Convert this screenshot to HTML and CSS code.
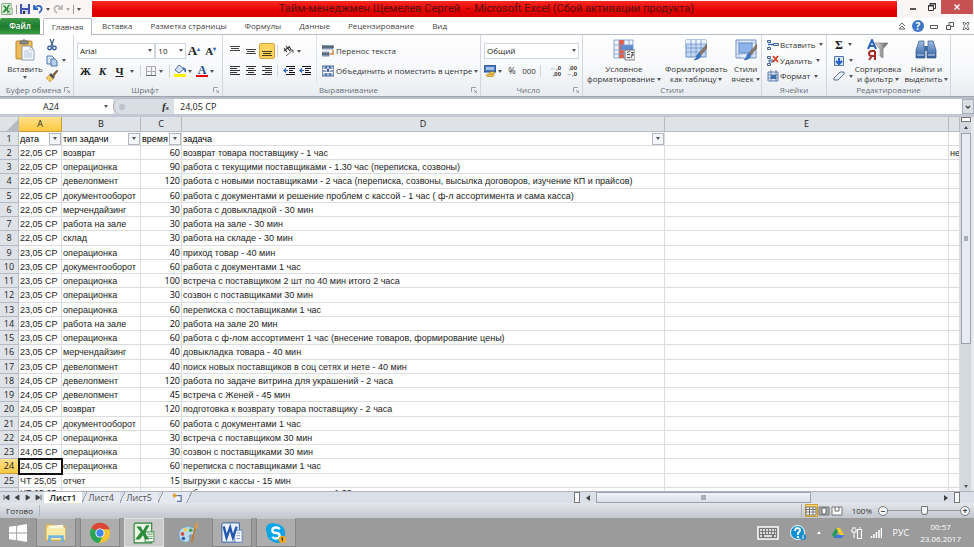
FILE: index.html
```html
<!DOCTYPE html>
<html lang="ru">
<head>
<meta charset="utf-8">
<title>Тайм-менеджмен Щемелев Сергей - Microsoft Excel</title>
<link rel="stylesheet" href="styles.css">
</head>
<body>
<svg class="defs" aria-hidden="true">
  <defs>
    <linearGradient id="blue" x1="0" y1="0" x2="0" y2="1"><stop offset="0" stop-color="#9fbfe6"/><stop offset="1" stop-color="#2f5d9e"/></linearGradient>
    <linearGradient id="steel" x1="0" y1="0" x2="1" y2="0"><stop offset="0" stop-color="#eee"/><stop offset="1" stop-color="#555"/></linearGradient>
  </defs>
  <symbol id="excel" viewBox="0 0 20 20"><path d="M2 1h15v18H1V2z" fill="#e9f5e4" stroke="#2d7d3a"/><path d="M11 9h8v9h-8z" fill="#fff" stroke="#5a9a5f"/><path d="M13 11h5M13 13h5M13 15h5" stroke="#6eb072"/><path d="M3 4h4l2 4 3-5h3l-4 7 4 6h-4l-2-4-3 4H2l5-7z" fill="#2c8a39"/></symbol>
  <symbol id="paste" viewBox="0 0 20 22"><rect x="1" y="2" width="16" height="18" rx="1" fill="#eebb5c" stroke="#b98733"/><path d="M5 4V2h2q2-3 4 0h2v3H5z" fill="#888" stroke="#555" stroke-width=".6"/><path d="M7 7h8l4 4v10H7z" fill="#f5f8fd" stroke="#7589a6" stroke-width=".8"/><path d="M15 7v4h4M9 12h5M9 14h8M9 16h8M9 18h8" stroke="#a5b6cf" stroke-width=".8" fill="none"/></symbol>
  <symbol id="cut" viewBox="0 0 12 12"><path d="M4 0l3 7M8 0L5 7" stroke="#48618a" stroke-width="1.3"/><circle cx="3.6" cy="9" r="1.8" fill="none" stroke="#2450a0" stroke-width="1.3"/><circle cx="8.4" cy="9" r="1.8" fill="none" stroke="#2450a0" stroke-width="1.3"/></symbol>
  <symbol id="copy" viewBox="0 0 12 12"><path d="M1 1h5l2 2v6H1z" fill="#dce8f8" stroke="#4f76ad"/><path d="M5 4h4l2 2v5H5z" fill="#b9d0ef" stroke="#4f76ad"/></symbol>
  <symbol id="brush" viewBox="0 0 12 12"><path d="M7 4l4-4 1 1-4 5z" fill="#8c6030" stroke="#5d4026" stroke-width=".5"/><path d="M5 3l4 4-2 2-4-4z" fill="#555"/><path d="M3 5l4 4-3 3-4-4z" fill="#efcf65" stroke="#a88334" stroke-width=".5"/></symbol>
  <symbol id="borders" viewBox="0 0 12 12"><path d="M1.500 1.500h9v9h-9zM6.500 2v9M1 6.500h10" fill="none" stroke="#aaa"/><path d="M1 10.500h10" stroke="#666"/></symbol>
  <symbol id="bucket" viewBox="0 0 12 12"><path d="M5 0L1 5l4 3 5-4z" fill="#d5e3f4" stroke="#4c6d9b"/><path d="M9 3q3 1 2 4" stroke="#2e65b3" stroke-width="1.6" fill="none"/><path d="M0 9h12v3H0z" fill="#ffef00"/></symbol>
  <symbol id="top" viewBox="0 0 12 12"><path d="M1 1.500h10M2 3.500h8M1 5.500h10" stroke="#444" stroke-width="1.200"/></symbol>
  <symbol id="mid" viewBox="0 0 12 12"><path d="M1 4.500h10M2 6.500h8M1 8.500h10" stroke="#444" stroke-width="1.200"/></symbol>
  <symbol id="bot" viewBox="0 0 12 12"><path d="M1 6.500h10M2 8.500h8M1 10.500h10" stroke="#4b3a10" stroke-width="1.200"/></symbol>
  <symbol id="left" viewBox="0 0 12 12"><path d="M1 1.500h10M1 3.500h7M1 5.500h10M1 7.500h7M1 9.500h10" stroke="#333"/></symbol>
  <symbol id="center" viewBox="0 0 12 12"><path d="M1 1.500h10M3 3.500h6M1 5.500h10M3 7.500h6M1 9.500h10" stroke="#333"/></symbol>
  <symbol id="right" viewBox="0 0 12 12"><path d="M1 1.500h10M4 3.500h7M1 5.500h10M4 7.500h7M1 9.500h10" stroke="#333"/></symbol>
  <symbol id="orient" viewBox="0 0 12 12"><path d="M1 3l3 4M3 1l4 5M1 6l5-4M6 1l2 4" stroke="#333" stroke-width="1.1" fill="none"/><path d="M3 11l7-6M7 5h3v3" stroke="#666" fill="none"/></symbol>
  <symbol id="outdent" viewBox="0 0 12 12"><path d="M3 1.500h9M6 3.500h6M6 5.500h4M6 7.500h6M3 9.500h9" stroke="#111"/><path d="M5 5.500H1M3 3.500l-2 2 2 2" stroke="#2a64c8" stroke-width="1.2" fill="none"/></symbol>
  <symbol id="wrap" viewBox="0 0 12 12"><path d="M0 0h11v4H0zM0 7h7v4H0z" fill="#9db4d6" stroke="#50688e" stroke-width=".7"/><path d="M0 2h12M0 9h7" stroke="#222"/><path d="M11 5v4H8" stroke="#d98135" stroke-width="1.5" fill="none"/></symbol>
  <symbol id="merge" viewBox="0 0 12 12"><path d="M0 1h12v10H0z" fill="#a9c0e0" stroke="#4d6a98"/><path d="M1 4h10v4H1z" fill="#fff"/><path d="M1 6h3M8 6h3M5 7l1-3 1 3M4 1v3M8 1v3M4 8v3M8 8v3" stroke="#243f78" fill="none"/></symbol>
  <symbol id="money" viewBox="0 0 12 12"><path d="M0 0h12v7H0z" fill="#4c78bb" stroke="#244c89"/><path d="M2 2h8v3H2z" fill="#a5c2e9"/><ellipse cx="8" cy="8" rx="3" ry="1.3" fill="#f2cf60" stroke="#a37c20" stroke-width=".6"/><ellipse cx="6" cy="10.4" rx="4" ry="1.4" fill="#edc14b" stroke="#a37c20" stroke-width=".6"/></symbol>
  <symbol id="cond" viewBox="0 0 22 22"><path d="M1 1h19v18H1z" fill="#eef4fc" stroke="#8ba6cd"/><path d="M6 1h5v18H6z" fill="#ec5b41"/><path d="M8 6h12v5H8z" fill="#5a8bd0"/><path d="M1 6h19M1 11h19M1 15h19M6 1v18M11 1v18M16 1v18" stroke="#7c9bc6" stroke-width=".8"/><path d="M12 11h10v10H12z" fill="#eee" stroke="#666" stroke-width=".8"/><path d="M14 13.500l3-1.500M14 15.500h3M18 13.500h3M18 16h3M14 18.500h3M18 19l2-5" stroke="#333" stroke-width=".8"/></symbol>
  <symbol id="tbl" viewBox="0 0 22 22"><path d="M1 1h20v17H1z" fill="#c2d8f3" stroke="#6b8fc4"/><path d="M1 1h20v4H1z" fill="#eaf2fc"/><path d="M1 5h20M1 9h20M1 13h20M6 1v17M11 1v17M16 1v17" stroke="#7396c9" stroke-width=".8"/><path d="M22 5l-8 9 2 2 6-7z" fill="#8a7765" stroke="#5e554e" stroke-width=".5"/><path d="M14 14l2 3q-2 4-7 4 3-2 3-5z" fill="#3b78c9" stroke="#2b568d" stroke-width=".5"/></symbol>
  <symbol id="cellst" viewBox="0 0 22 22"><path d="M1 1h20v18H1z" fill="#e6effb" stroke="#6b8fc4"/><path d="M4 4h13v10H4z" fill="#8db4e8" stroke="#5783c2"/><path d="M1 4h20M1 15h20M4 1v18M17 1v18" stroke="#8eabd4" stroke-width=".8"/><path d="M22 5l-8 9 2 2 6-7z" fill="#8a7765" stroke="#5e554e" stroke-width=".5"/><path d="M14 14l2 3q-2 4-7 4 3-2 3-5z" fill="#3b78c9" stroke="#2b568d" stroke-width=".5"/></symbol>
  <symbol id="ins" viewBox="0 0 12 12"><path d="M.5 1.500h3v2h-3zM.5 8.500h3v2h-3zM6.500 4.500h5v2h-5z" fill="#dbe7f6" stroke="#45648f"/><path d="M6 5.500H1" stroke="#245fb0" stroke-width="1.4"/></symbol>
  <symbol id="del" viewBox="0 0 12 12"><path d="M.5 1.500h3v2h-3zM.5 8.500h3v2h-3zM2 5h4v2H2z" fill="#dbe7f6" stroke="#45648f"/><path d="M6 1l5 6M11 1L6 7" stroke="#e13a20" stroke-width="1.8"/></symbol>
  <symbol id="fmt" viewBox="0 0 12 12"><path d="M1 2h10v9H1z" fill="#dbe7f6" stroke="#6483b1"/><path d="M4 5h5v4H4z" fill="#3e72bd"/><path d="M1 5h10M1 8h10M4 0v11M9 0v11" stroke="#45648f" stroke-width=".7"/></symbol>
  <symbol id="fill" viewBox="0 0 12 12"><path d="M1.500 1.500h9v9h-9z" fill="#d9e6f8" stroke="#5779aa"/><path d="M6 3v6M3 6l3 3 3-3" stroke="#2361c8" stroke-width="2" fill="none"/></symbol>
  <symbol id="eraser" viewBox="0 0 12 12"><path d="M1 8l6-6h4v2l-6 6H1z" fill="#e8eef7" stroke="#60708c"/></symbol>
  <symbol id="funnel" viewBox="0 0 22 22"><path d="M8 4h13l-5 6v9l-3-2v-7z" fill="url(#steel)" stroke="#777" stroke-width=".6"/><path d="M1 10L5 1l4 9M2 7h6" stroke="#2c62b5" stroke-width="2" fill="none"/><path d="M8 12v9M8 12H5q-3 0-3 2.500t3 2.500h3M5 17l-3 4" stroke="#a52a28" stroke-width="2" fill="none"/></symbol>
  <symbol id="binoc" viewBox="0 0 22 22"><path d="M4 2h5v5l1 3v9H1v-8zM13 2h5l3 9v8h-9v-9l1-3z" fill="url(#blue)" stroke="#36547f" stroke-width=".7"/><path d="M9 7h4v5H9z" fill="#466da5"/><path d="M2 16h7M13 16h7" stroke="#c5d8f0"/></symbol>
  <symbol id="launch" viewBox="0 0 6 6"><path d="M.5 5V.5H5M3 3l2.500 2.500M6 3v3H3" fill="none" stroke="#888" stroke-width=".8"/></symbol>
  <symbol id="grid" viewBox="0 0 12 12"><path d="M1 2h10v8H1zM1 4.500h10M1 7h10M4.500 2v8M8 2v8" fill="#fff" stroke="#666" stroke-width=".9"/></symbol>
</svg>

<div class="window">
<header class="titlebar">
  <div class="quick">
    <svg class="i12"><use href="#excel"/></svg><i class="bar"></i>
    <button aria-label="Сохранить"><svg class="i10" viewBox="0 0 10 10"><path d="M0 0h10v10H0z" fill="#4551b5"/><path d="M2 0h6v4H2z" fill="#e8eefb"/><path d="M2 6h6v4H2z" fill="#c9d2ee"/><path d="M3 7h2v3H3z" fill="#333"/></svg></button>
    <button aria-label="Отменить"><svg class="i10" viewBox="0 0 10 10"><path d="M1 1v4h4M1 5q4-5 7-2 2 3-2 6" fill="none" stroke="#2d66c0" stroke-width="1.800"/></svg></button><i class="caret"></i>
    <button aria-label="Вернуть"><svg class="i10" viewBox="0 0 10 10"><path d="M9 1v4H5M9 5Q5 0 2 3 0 6 4 9" fill="none" stroke="#b5b5b5" stroke-width="1.600"/></svg></button><i class="caret pale"></i><i class="bar"></i><i class="caret"></i>
  </div>
  <h1>Тайм-менеджмен Щемелев Сергей &nbsp;-&nbsp; Microsoft Excel (Сбой активации продукта)</h1>
  <div class="syskeys">
    <button aria-label="Свернуть"><svg class="i8" viewBox="0 0 8 8"><path d="M1 6h6" stroke="#222" stroke-width="1.500"/></svg></button>
    <button aria-label="Развернуть"><svg class="i8" viewBox="0 0 8 8"><path d="M.5 2.500h5v5h-5zM2 2V.5h5.500v5H6" fill="none" stroke="#333"/><path d="M0 3h6M2 1h6" stroke="#333"/></svg></button>
    <button class="close" aria-label="Закрыть"><svg class="i8" viewBox="0 0 8 8"><path d="M1.500 1.500l5 5M6.500 1.500l-5 5" stroke="#fff" stroke-width="1.400"/></svg></button>
  </div>
</header>

<nav class="tabs">
  <button class="file">Файл</button>
  <button class="active">Главная</button>
  <button>Вставка</button><button>Разметка страницы</button><button>Формулы</button><button>Данные</button><button>Рецензирование</button><button>Вид</button>
  <div class="tabtools">
    <svg class="i8" viewBox="0 0 8 8"><path d="M1 4l3-3 3 3M1 7l3-3 3 3z" fill="none" stroke="#666"/></svg>
    <span class="help">?</span>
    <svg class="i8" viewBox="0 0 8 8"><path d="M.5 3.500h7v3h-7z" fill="none" stroke="#555"/></svg>
    <svg class="i8" viewBox="0 0 8 8"><path d="M.5 3.500h4v4h-4zM3 3V.5h4.500v4H5" fill="none" stroke="#555"/></svg>
    <svg class="i8" viewBox="0 0 8 8"><path d="M1 .5h2l1 2 1-2h2L5.500 4 7 7.500H5l-1-2-1 2H1L2.500 4z" fill="none" stroke="#555" stroke-width=".8"/></svg>
  </div>
</nav>

<section class="ribbon">
  <div class="group g-clip">
    <div class="body">
      <button class="big"><svg class="i22"><use href="#paste"/></svg><span>Вставить</span><i class="caret"></i></button>
      <div class="stack"><button aria-label="Вырезать"><svg class="i12"><use href="#cut"/></svg></button><button aria-label="Копировать"><svg class="i12"><use href="#copy"/></svg><i class="caret"></i></button><button aria-label="Формат по образцу"><svg class="i12"><use href="#brush"/></svg></button></div>
    </div>
    <footer><span>Буфер обмена</span><svg class="i6"><use href="#launch"/></svg></footer>
  </div>
  <div class="group g-font">
    <div class="body rows">
      <div class="row">
        <label class="combo wide"><select aria-label="Шрифт"><option>Arial</option></select><i class="caret"></i></label><label class="combo narrow"><select aria-label="Размер"><option>10</option></select><i class="caret"></i></label>
        <button class="serif grow">A<sup>▴</sup></button><button class="serif shrink">A<sup>▾</sup></button>
      </div>
      <div class="row styles">
        <button class="serif">Ж</button><button class="serif it">К</button><button class="serif un">Ч</button><i class="caret"></i><i class="sep"></i>
        <button aria-label="Границы"><svg class="i12"><use href="#borders"/></svg></button><i class="caret"></i><i class="sep"></i>
        <button aria-label="Заливка"><svg class="i12"><use href="#bucket"/></svg></button><i class="caret"></i>
        <button class="serif color">A</button><i class="caret"></i>
      </div>
    </div>
    <footer><span>Шрифт</span><svg class="i6"><use href="#launch"/></svg></footer>
  </div>
  <div class="group g-align">
    <div class="body">
      <div class="rows alignkeys">
        <div class="row"><button aria-label="Сверху"><svg class="i12"><use href="#top"/></svg></button><button aria-label="По середине"><svg class="i12"><use href="#mid"/></svg></button><button class="on" aria-label="Снизу"><svg class="i12"><use href="#bot"/></svg></button><i class="sep"></i><button aria-label="Ориентация"><svg class="i12"><use href="#orient"/></svg></button><i class="caret"></i></div>
        <div class="row"><button aria-label="Слева"><svg class="i12"><use href="#left"/></svg></button><button aria-label="По центру"><svg class="i12"><use href="#center"/></svg></button><button aria-label="Справа"><svg class="i12"><use href="#right"/></svg></button><i class="sep"></i><button aria-label="Уменьшить отступ"><svg class="i12"><use href="#outdent"/></svg></button><button aria-label="Увеличить отступ"><svg class="i12"><use href="#outdent"/></svg></button></div>
      </div>
      <div class="rows wraps">
        <div class="row"><button><svg class="i12"><use href="#wrap"/></svg>Перенос текста</button></div>
        <div class="row"><button><svg class="i12"><use href="#merge"/></svg>Объединить и поместить в центре<i class="caret"></i></button></div>
      </div>
    </div>
    <footer><span>Выравнивание</span><svg class="i6"><use href="#launch"/></svg></footer>
  </div>
  <div class="group g-num">
    <div class="body rows">
      <div class="row"><label class="combo full"><select aria-label="Формат числа"><option>Общий</option></select><i class="caret"></i></label></div>
      <div class="row nums"><button aria-label="Денежный"><svg class="i12"><use href="#money"/></svg></button><i class="caret"></i><button class="pct">%</button><button class="zeros">000</button><i class="sep"></i><button class="dec"><b>←</b>,0<br>,00</button><button class="dec">,00<br><b>→</b>,0</button></div>
    </div>
    <footer><span>Число</span><svg class="i6"><use href="#launch"/></svg></footer>
  </div>
  <div class="group g-style">
    <div class="body">
      <button class="big"><svg class="i22"><use href="#cond"/></svg><span>Условное</span><span>форматирование<i class="caret"></i></span></button>
      <button class="big"><svg class="i22"><use href="#tbl"/></svg><span>Форматировать</span><span>как таблицу<i class="caret"></i></span></button>
      <button class="big"><svg class="i22"><use href="#cellst"/></svg><span>Стили</span><span>ячеек<i class="caret"></i></span></button>
    </div>
    <footer><span>Стили</span></footer>
  </div>
  <div class="group g-cells">
    <div class="body"><div class="stack">
      <button><svg class="i12"><use href="#ins"/></svg>Вставить<i class="caret"></i></button><button><svg class="i12"><use href="#del"/></svg>Удалить<i class="caret"></i></button><button><svg class="i12"><use href="#fmt"/></svg>Формат<i class="caret"></i></button>
    </div></div>
    <footer><span>Ячейки</span></footer>
  </div>
  <div class="group g-edit">
    <div class="body">
      <div class="stack"><button class="sigma">Σ<i class="caret"></i></button><button aria-label="Заполнить"><svg class="i12"><use href="#fill"/></svg><i class="caret"></i></button><button aria-label="Очистить"><svg class="i12"><use href="#eraser"/></svg><i class="caret"></i></button></div>
      <button class="big"><svg class="i22"><use href="#funnel"/></svg><span>Сортировка</span><span>и фильтр<i class="caret"></i></span></button>
      <button class="big"><svg class="i22"><use href="#binoc"/></svg><span>Найти и</span><span>выделить<i class="caret"></i></span></button>
    </div>
    <footer><span>Редактирование</span></footer>
  </div>
</section>

<section class="formula">
  <div class="namebox"><input class="name" aria-label="Имя ячейки" value="A24"><i class="caret"></i></div>
  <div class="fxbar"><i class="knob"></i><em>f<small>x</small></em></div>
  <input class="value" aria-label="Строка формул" value="24,05 СР">
  <button class="expand" aria-label="Развернуть строку"><svg class="i6" viewBox="0 0 6 6"><path d="M1 2l2 2 2-2" fill="none" stroke="#444" stroke-width="1.400"/></svg></button>
</section>

<main class="sheet">
  <div class="cells">
  <table>
    <colgroup><col class="c-n"><col class="c-a"><col class="c-b"><col class="c-c"><col class="c-d"><col class="c-e"><col class="c-f"></colgroup>
    <thead><tr><th class="corner"></th><th class="cur">A</th><th>B</th><th>C</th><th>D</th><th>E</th><th></th></tr></thead>
    <tbody>
    <tr class="names"><th>1</th><td><div>дата<button aria-label="Фильтр"></button></div></td><td><div>тип задачи<button aria-label="Фильтр"></button></div></td><td><div>время<button aria-label="Фильтр"></button></div></td><td><div>задача<button aria-label="Фильтр"></button></div></td><td></td><td></td></tr>
    <tr><th>2</th><td>22,05 СР</td><td>возврат</td><td>60</td><td>возврат товара поставщику - 1 час</td><td></td><td>не</td></tr>
    <tr><th>3</th><td>22,05 СР</td><td>операционка</td><td>90</td><td>работа с текущими поставщиками - 1.30 час (переписка, созвоны)</td><td></td><td></td></tr>
    <tr><th>4</th><td>22,05 СР</td><td>девелопмент</td><td>120</td><td>работа с новыми поставщиками - 2 часа (переписка, созвоны, высылка договоров, изучение КП и прайсов)</td><td></td><td></td></tr>
    <tr><th>5</th><td>22,05 СР</td><td>документооборот</td><td>60</td><td>работа с документами и решение проблем с кассой - 1 час ( ф-л ассортимента и сама касса)</td><td></td><td></td></tr>
    <tr><th>6</th><td>22,05 СР</td><td>мерчендайзинг</td><td>30</td><td>работа с довыкладкой - 30 мин</td><td></td><td></td></tr>
    <tr><th>7</th><td>22,05 СР</td><td>работа на зале</td><td>30</td><td>работа на зале - 30 мин</td><td></td><td></td></tr>
    <tr><th>8</th><td>22,05 СР</td><td>склад</td><td>30</td><td>работа на складе - 30 мин</td><td></td><td></td></tr>
    <tr><th>9</th><td>23,05 СР</td><td>операционка</td><td>40</td><td>приход товар - 40 мин</td><td></td><td></td></tr>
    <tr><th>10</th><td>23,05 СР</td><td>документооборот</td><td>60</td><td>работа с документами 1 час</td><td></td><td></td></tr>
    <tr><th>11</th><td>23,05 СР</td><td>операционка</td><td>100</td><td>встреча с поставщиком 2 шт по 40 мин итого 2 часа</td><td></td><td></td></tr>
    <tr><th>12</th><td>23,05 СР</td><td>операционка</td><td>30</td><td>созвон с поставщиками 30 мин</td><td></td><td></td></tr>
    <tr><th>13</th><td>23,05 СР</td><td>операционка</td><td>60</td><td>переписка с поставщиками 1 час</td><td></td><td></td></tr>
    <tr><th>14</th><td>23,05 СР</td><td>работа на зале</td><td>20</td><td>работа на зале 20 мин</td><td></td><td></td></tr>
    <tr><th>15</th><td>23,05 СР</td><td>операционка</td><td>60</td><td>работа с ф-лом ассортимент 1 час (внесение товаров, формирование цены)</td><td></td><td></td></tr>
    <tr><th>16</th><td>23,05 СР</td><td>мерчендайзинг</td><td>40</td><td>довыкладка товара - 40 мин</td><td></td><td></td></tr>
    <tr><th>17</th><td>23,05 СР</td><td>девелопмент</td><td>40</td><td>поиск новых поставщиков в соц сетях и нете - 40 мин</td><td></td><td></td></tr>
    <tr><th>18</th><td>24,05 СР</td><td>девелопмент</td><td>120</td><td>работа по задаче витрина для украшений - 2 часа</td><td></td><td></td></tr>
    <tr><th>19</th><td>24,05 СР</td><td>девелопмент</td><td>45</td><td>встреча с Женей - 45 мин</td><td></td><td></td></tr>
    <tr><th>20</th><td>24,05 СР</td><td>возврат</td><td>120</td><td>подготовка к возврату товара поставщику - 2 часа</td><td></td><td></td></tr>
    <tr><th>21</th><td>24,05 СР</td><td>документооборот</td><td>60</td><td>работа с документами 1 час</td><td></td><td></td></tr>
    <tr><th>22</th><td>24,05 СР</td><td>операционка</td><td>30</td><td>встреча с поставщиком 30 мин</td><td></td><td></td></tr>
    <tr><th>23</th><td>24,05 СР</td><td>операционка</td><td>30</td><td>созвон с поставщиками 30 мин</td><td></td><td></td></tr>
    <tr><th class="cur">24</th><td class="picked">24,05 СР</td><td>операционка</td><td>60</td><td>переписка с поставщиками 1 час</td><td></td><td></td></tr>
    <tr><th>25</th><td>ЧТ 25,05</td><td>отчет</td><td>15</td><td>выгрузки с кассы - 15 мин</td><td></td><td></td></tr>
    <tr class="tail"><th></th><td>ЧТ 25,05</td><td></td><td></td><td>работа с текущими поставщиками - 1.30</td><td></td><td></td></tr>
    </tbody>
  </table>
  </div>
  <div class="vscroll"><i class="split"></i><i class="caret up"></i><i class="thumb"></i><i class="caret"></i></div>
</main>

<div class="sheetbar">
  <div class="arrows"><svg viewBox="0 0 44 12"><path d="M4 3v5M9 3v5L5 5.500zM19 3v5l-4-2.500zM26 3v5l4-2.500zM36 3v5l4-2.500zM41 3v5" fill="#444" stroke="#444" stroke-width=".8"/></svg></div>
  <button class="leaf on">Лист1</button><button class="leaf">Лист4</button><button class="leaf">Лист5</button>
  <button class="leaf add" aria-label="Вставить лист"><svg class="i10" viewBox="0 0 12 12"><path d="M4 3h7v7H6" fill="#f4f7fd" stroke="#5877a6" stroke-width="1.500"/><path d="M3 0v6M0 3h6M1 1l4 4M5 1L1 5" stroke="#e79a28"/></svg></button>
  <div class="hscroll"><i class="split"></i><i class="caret lt"></i><i class="track"><i class="thumb"><i></i></i></i><i class="caret rt"></i><i class="split"></i></div>
</div>

<div class="status">
  <span>Готово</span><i class="line"></i>
  <div class="views"><button class="on" aria-label="Обычный"><svg class="i12"><use href="#grid"/></svg></button><button aria-label="Разметка"><svg class="i12" viewBox="0 0 12 12"><path d="M1 2h10v8H1z" fill="#aaa" stroke="#777"/><path d="M4 3h4v6H4z" fill="#fff" stroke="#666"/></svg></button><button aria-label="Страничный"><svg class="i12" viewBox="0 0 12 12"><path d="M1 2h10v8H1z" fill="#fff" stroke="#777"/><path d="M4 2v4h4V2" fill="none" stroke="#666"/></svg></button></div>
  <output>100%</output>
  <button class="round">−</button><input type="range" aria-label="Масштаб" min="0" max="100" value="50"><button class="round">+</button>
</div>

<footer class="taskbar">
  <button class="start" aria-label="Пуск"><svg viewBox="0 0 20 20"><path d="M0 3l8-1v7.500H0zM9 2l11-2v9.500H9zM0 10.500h8V18l-8-1zM9 10.500h11V20L9 18z" fill="#fff"/></svg></button>
  <button class="app open" aria-label="Проводник"><svg viewBox="0 0 24 24"><path d="M1 3h8l2 2h11v15H1z" fill="#efd27a" stroke="#d2ab49"/><path d="M2 7h20v12H2z" fill="#f9eaa8"/><path d="M4 4l16-1v4H4z" fill="#fff8d9"/><path d="M5 22v-6h14v6" fill="none" stroke="#70b6dc" stroke-width="3"/></svg></button>
  <button class="app open" aria-label="Chrome"><svg viewBox="0 0 24 24"><circle cx="12" cy="12" r="11" fill="#f4c431"/><path d="M12 12L2.500 6.500A11 11 0 0 1 22.500 8H12z" fill="#dc4637"/><path d="M2.500 6.500A11 11 0 0 0 11 23l5-9-4-2z" fill="#2ca45a"/><circle cx="12" cy="12" r="5" fill="#fff"/><circle cx="12" cy="12" r="4" fill="#4285e8"/></svg></button>
  <button class="app open current" aria-label="Excel"><svg><use href="#excel"/></svg></button>
  <button class="app" aria-label="Paint"><svg viewBox="0 0 24 24"><path d="M2 14Q2 6 11 5q10 0 9 7-1 3-5 2-3 0-1 4 0 4-5 4-7-1-7-8z" fill="#b9dced" stroke="#6fa3bd"/><circle cx="6" cy="13" r="2" fill="#d64b3c"/><circle cx="9" cy="8.500" r="2" fill="#f2c94a"/><circle cx="15" cy="9" r="2" fill="#4a9c4b"/><circle cx="7" cy="18" r="2" fill="#385eb2"/><path d="M21 1l-5 21" stroke="#bd7a36" stroke-width="2"/><path d="M20 1h3l-1 6h-3z" fill="#d99a4e"/></svg></button>
  <button class="app open" aria-label="Word"><svg viewBox="0 0 24 24"><path d="M2 1h18v21H1V2z" fill="#eaf1fc" stroke="#2c5aa5"/><path d="M15 9h8v13h-8z" fill="#fff" stroke="#5c83bf"/><path d="M17 12h4M17 15h4M17 18h4" stroke="#6f96d0"/><path d="M3 5l3 12 4-11 3 11 4-12" fill="none" stroke="#2456ae" stroke-width="2.600"/></svg></button>
  <button class="app open" aria-label="Skype"><svg viewBox="0 0 24 24"><circle cx="8" cy="8" r="7" fill="#0aa5e6"/><circle cx="15" cy="16" r="7" fill="#0aa5e6"/><circle cx="12" cy="12" r="10" fill="#0aa5e6"/><path d="M16 8q-1-2-4-2-4 0-4 3t4 3 4 3-4 3q-3 0-4-2" fill="none" stroke="#fff" stroke-width="2.500"/><circle cx="19" cy="19" r="4" fill="#f5a623"/><path d="M18 18l1-1v4" stroke="#222" fill="none"/></svg></button>
  <div class="tray">
    <svg class="kbd" viewBox="0 0 22 14"><path d="M1 1h20v12H1z" fill="#777" stroke="#fff" stroke-width="1.500"/><path d="M3 4h16M3 7h16" stroke="#fff" stroke-width="1.500" stroke-dasharray="2 1"/><path d="M3 10h2M7 10h8M17 10h2" stroke="#fff" stroke-width="1.500"/></svg>
    <svg class="i16" viewBox="0 0 16 16"><circle cx="7.500" cy="7.500" r="7" fill="#0d8fd0" stroke="#fff"/><path d="M5 6q0-3 3-3 3 1 2 3L8 8v2M8 11v2" fill="none" stroke="#fff" stroke-width="1.800"/><circle cx="13" cy="12" r="3" fill="#1488c8"/><path d="M13 10v4" stroke="#fff"/></svg>
    <i class="caret up"></i>
    <svg class="i12" viewBox="0 0 12 12"><path d="M4 1h4l4 7H8z" fill="#fbcc30"/><path d="M4 1l2 3.500L2 11 0 8z" fill="#1c9b55"/><path d="M4 8h8l-2 3H2z" fill="#3c74d8"/></svg>
    <svg class="i12" viewBox="0 0 12 12"><path d="M6.500 2.500h4v9h-4zM8 1h2M1 2v3h4V2M3 5v6M2 0v2M4 0v2" fill="none" stroke="#fff" stroke-width="1.100"/></svg>
    <svg class="i12" viewBox="0 0 12 12"><path d="M1.500 9v2M4 7v4M6.500 5v6M9 3v8M11.500 1v10" stroke="#fff" stroke-width="1.500"/></svg>
    <span>РУС</span>
    <time>00:57<br>23.06.2017</time>
  </div>
</footer>
</div>
</body>
</html>
```

FILE: styles.css
```css
* { box-sizing: border-box; }
body { margin: 0; font: 8px/10px "Open Sans", "Noto Sans", sans-serif; color: #333; }
button, input, select { font: inherit; color: inherit; background: none; border: 0; padding: 0; margin: 0; outline: 0; }
button { display: inline-flex; align-items: center; justify-content: center; white-space: nowrap; }
svg { display: block; flex: none; }
.defs { position: absolute; width: 0; height: 0; }
.i6 { width: 6px; height: 6px; }
.i8 { width: 8px; height: 8px; }
.i10 { width: 10px; height: 10px; }
.i12 { width: 12px; height: 12px; }
.i16 { width: 16px; height: 16px; }
.i22 { width: 22px; height: 22px; }
.caret { flex: none; display: inline-block; border: 2px solid transparent; border-top: 3px solid #555; border-bottom: 0; margin: 0 2px; }
.caret.up { border-top: 0; border-bottom: 3px solid #444; }
.caret.lt { border: 3px solid transparent; border-right: 4px solid #444; border-left: 0; }
.caret.rt { border: 3px solid transparent; border-left: 4px solid #444; border-right: 0; }
.caret.pale { border-top-color: #aaa; }
.window { height: 100vh; display: flex; flex-direction: column; overflow: hidden; background: #fff; }

.titlebar { flex: none; display: flex; height: 18px; background: #fbf5f5; }
.quick { width: 92px; display: flex; align-items: center; gap: 3px; padding: 0 1px; }
.quick .caret { margin: 0; }
.quick .bar { width: 1px; height: 9px; background: #999; }
.titlebar h1 { flex: 1; margin: 1px 0 0; padding-right: 16px; height: 16px; background: linear-gradient(#f92a22, #e30000 60%, #d90000); color: #5a1010; font-family: Roboto, sans-serif; font-size: 11px; line-height: 16px; font-weight: 400; text-align: center; white-space: nowrap; }
.syskeys { display: flex; width: 77px; justify-content: flex-end; height: 14px; }
.syskeys button { width: 19px; }
.syskeys .close { width: 32px; background: #c75050; margin-right: 1px; }

.tabs { flex: none; display: flex; height: 17px; border-bottom: 1px solid #b6bcc6; color: #444; }
.tabs button { padding: 0 9px; }
.tabs .file { width: 40px; margin-right: 3px; padding: 0; background: linear-gradient(#3e9a45, #1d7b30 50%, #3a9c41); color: #fff; font-weight: 600; border-radius: 2px 2px 0 0; }
.tabs .active { width: 49px; margin-right: 1px; padding: 0; background: #fff; border: 1px solid #b6bcc6; border-bottom: 0; margin-bottom: -1px; border-radius: 2px 2px 0 0; }
.tabtools { margin-left: auto; display: flex; align-items: center; gap: 8px; padding-right: 4px; }
.help { width: 12px; height: 12px; border-radius: 50%; background: #3e76c7; color: #fff; font-weight: 700; font-size: 10px; line-height: 12px; text-align: center; margin: 0 -2px; }

.ribbon { flex: none; display: flex; height: 62px; background: linear-gradient(#fff, #f8f9fb 50%, #e9ecf1); border-bottom: 1px solid #9ea5b0; }
.group { flex: none; display: flex; flex-direction: column; border-right: 1px solid #d3d7dd; }
.g-clip { width: 74px; }
.g-font { width: 149px; }
.g-align { width: 258px; }
.g-num { width: 102px; }
.g-style { width: 179px; }
.g-cells { width: 65px; }
.g-edit { width: 124px; }
.body { flex: 1; display: flex; min-height: 0; }
.group footer { display: flex; align-items: center; height: 12px; color: #6b7380; padding: 0 3px; }
.group footer span { flex: 1; text-align: center; white-space: nowrap; }
.big { flex-direction: column; justify-content: flex-start; padding: 4px 2px 0; line-height: 10px; }
.big svg { margin-bottom: 3px; }
.big span { display: flex; align-items: center; height: 10px; }
.big > .caret { margin-top: 2px; }
.big span .caret { margin: 0 0 0 2px; }
.stack { display: flex; flex-direction: column; align-items: flex-start; padding-top: 2px; }
.stack button { height: 16px; gap: 1px; }
.stack .caret { margin: 0 0 0 3px; }
.g-clip .big { width: 42px; margin-left: 4px; }
.rows { flex-direction: column; padding: 6px 3px 0; }
.row { display: flex; align-items: center; height: 20px; }
.combo { display: flex; align-items: center; height: 16px; border: 1px solid #d1d5dc; background: #fff; margin-top: -1px; }
.combo select { flex: 1; min-width: 0; appearance: none; padding-left: 2px; color: #222; }
.wide { width: 80px; }
.narrow { width: 31px; }
.full { width: 95px; }
.serif { font-family: "Liberation Serif", serif; font-weight: 700; font-size: 11px; color: #222; width: 17px; }
.grow { font-size: 13px; }
.row sup { font-size: 6px; line-height: 6px; align-self: flex-start; color: #2e65b3; }
.it { font-style: italic; }
.un { text-decoration: underline; }
.sep { flex: none; width: 1px; height: 12px; background: #d3d6dc; margin: 0 4px; }
.styles .color { font-size: 12px; line-height: 10px; width: 12px; margin-left: 2px; border-bottom: 2px solid #e00; color: #244d8d; }
.alignkeys button { height: 16px; width: 16px; }
.alignkeys .sep { margin: 0 3px 0 2px; }
.alignkeys .caret { margin: 0; }
.alignkeys { width: 94px; border-right: 1px solid #dfe2e7; padding-left: 4px; }
.alignkeys .on { background: #ffd45e; border: 1px solid #d0a540; border-radius: 2px; }
.wraps { padding-left: 5px; }
.wraps button { gap: 2px; }
.wraps .caret { margin: 0; }
.nums .pct { font-size: 9px; width: 16px; }
.nums .zeros { width: 14px; margin-left: 2px; }
.dec { display: block; font: 700 6px/6px "Liberation Sans", sans-serif; width: 16px; text-align: right; }
.dec b { color: #2e65b3; }
.g-style .body { padding-left: 2px; }
.g-cells .stack { padding-left: 5px; }
.g-edit .stack { padding-left: 6px; width: 26px; }
.g-edit .big { flex: auto; padding-left: 0; padding-right: 0; }
.stack .sigma { font: 700 12px/12px "Liberation Serif", serif; color: #222; padding-left: 2px; }
.sigma .caret { margin-left: 4px; }

.formula { flex: none; display: flex; align-items: center; height: 20px; background: #d9dde4; border-top: 2px solid #b9bec7; border-bottom: 3px solid #c3c8d2; color: #222; }
.formula input { height: 15px; }
.namebox { display: flex; align-items: center; width: 113px; background: #fff; }
.formula .name { width: 102px; text-align: center; font-size: 9px; }
.fxbar { display: flex; align-items: center; justify-content: space-between; width: 61px; height: 15px; border-left: 1px solid #aaa; border-radius: 8px 0 0 8px; background: #d9dde4; padding: 0 5px; }
.knob { width: 6px; height: 6px; border-radius: 50%; background: #bcc1ca; }
.fxbar em { font: italic 700 10px "Liberation Serif", serif; }
.fxbar small { font-size: 7px; }
.formula .value { flex: 1; min-width: 0; padding-left: 6px; font-size: 9px; background: #fff; }
.formula .expand { width: 12px; height: 15px; border: 1px solid #a9afba; background: #d9dde4; }

.sheet { flex: 1; min-height: 0; display: flex; }
.cells { flex: 1; min-width: 0; overflow: hidden; }
table { width: 100%; table-layout: fixed; border-collapse: separate; border-spacing: 0; font: 9px/12px "Liberation Sans", sans-serif; color: #222; }
.c-n { width: 19px; }
.c-a { width: 43px; }
.c-b { width: 79px; }
.c-c { width: 41px; }
.c-d { width: 483px; }
.c-f { width: 11px; }
th, td { padding: 0; height: 14px; overflow: hidden; white-space: nowrap; border-right: 1px solid #dcdde0; border-bottom: 1px solid #dcdde0; }
th { font-weight: 400; font-family: "Open Sans", sans-serif; background: #dfe3e8; border-color: #b5bac3; }
thead th { height: 15px; }
tbody tr:nth-child(4n) > * { height: 15px; }
.cur { background: linear-gradient(#ffe18c, #fcc93f); border-color: #c99b3b; }
.corner { background: linear-gradient(135deg, #dfe3e8 65%, #b5bac3 65%); }
td { padding-left: 1px; }
td:nth-child(4) { text-align: right; font-family: "Open Sans", sans-serif; padding-right: 1px; color: #000; }
tr.tail td { vertical-align: top; line-height: 10px; }
.names td { padding-right: 0; color: #000; }
.names div { display: flex; justify-content: space-between; align-items: center; text-align: left; height: 12px; font-family: "Liberation Sans", sans-serif; }
.names button { flex: none; width: 12px; height: 12px; border: 1px solid #b3b7c0; background: #f5f6f9; }
.names button::after { content: ""; border: 2px solid transparent; border-top: 3px solid #555; border-bottom: 0; }
.picked { outline: 2px solid #111; outline-offset: -1px; }
.vscroll { width: 14px; display: flex; flex-direction: column; align-items: center; background: #d4d8df; border-right: 3px solid #e6e8ec; gap: 4px; padding-bottom: 3px; }
.vscroll .split { width: 10px; height: 5px; border: 1px solid #777; background: #fff; }
.vscroll .thumb { flex: 0 1 57%; display: flex; align-items: center; justify-content: center; width: 10px; background: #e8ebf1; border: 1px solid #9ba1ad; margin-bottom: auto; }
.vscroll .thumb::after { content: ""; width: 4px; height: 5px; background: #a9adb5; }

.sheetbar { flex: none; display: flex; height: 12px; background: #dbe0e8; border-top: 1px solid #aeb3bd; font-size: 9px; color: #555; }
.arrows { width: 44px; }
.arrows svg { width: 44px; height: 12px; }
.leaf { width: 38px; background: linear-gradient(115deg, transparent 4px, #9fa5b0 4px, #9fa5b0 5px, #e6eaf0 5px); }
.leaf.on { background: #fff; font-weight: 600; color: #222; }
.leaf.add { background: linear-gradient(115deg, transparent 4px, #9fa5b0 4px, #9fa5b0 5px, #e6eaf0 5px, #e6eaf0 30px, #9fa5b0 30px, #9fa5b0 31px, transparent 31px); }
.hscroll { flex: 0 1 386px; margin-left: auto; margin-right: 14px; display: flex; align-items: center; gap: 4px; }
.hscroll .split { width: 6px; height: 11px; border: 1px solid #777; background: #fff; }
.track { flex: 1; height: 11px; }
.hscroll .thumb { display: flex; align-items: center; justify-content: center; width: 63%; height: 11px; background: linear-gradient(#f2f4f8, #dadfe8); border: 1px solid #9ba1ad; }
.hscroll .thumb > i { width: 5px; height: 5px; background: #a9adb5; }

.status { flex: none; display: flex; align-items: center; height: 15px; background: linear-gradient(#e3e6ea, #c2c7ce); padding: 0 4px 0 6px; }
.status .line { width: 1px; height: 12px; background: #b0b5bd; margin-left: 6px; }
.views { display: flex; margin-left: auto; padding-left: 3px; border-left: 1px solid #aaa; }
.views button { width: 13px; height: 13px; }
.views .on { background: #ffd866; border: 1px solid #cf9f37; }
.status output { margin: 0 6px 0 8px; }
.round { width: 10px; height: 10px; border: 1px solid #777; border-radius: 50%; background: #f5f6f8; line-height: 8px; font-weight: 700; }
input[type=range] { appearance: none; width: 72px; height: 10px; background: linear-gradient(#999, #999) center / 100% 1px no-repeat; }
input[type=range]::-webkit-slider-thumb { appearance: none; width: 7px; height: 9px; border: 1px solid #777; border-radius: 1px 1px 4px 4px; background: #f5f6f8; }

.taskbar { flex: none; display: flex; height: 29px; background: #9b9b9c; color: #fff; }
.start { width: 36px; }
.start svg { width: 18px; height: 18px; }
.app { width: 40px; margin-right: 4px; }
.app svg { width: 22px; height: 22px; }
.app.open { background: #adadae; border: 1px solid #868687; border-top-color: #c4c4c4; }
.app.current { background: #cbcbcc; border-color: #e0e0e0; }
.tray { margin-left: auto; display: flex; align-items: center; gap: 7px; padding-right: 13px; }
.tray span { font-size: 9px; margin: 0 4px; }
.kbd { width: 22px; height: 14px; margin-right: 4px; }
.tray .caret { border-bottom-color: #fff; margin: 0 4px; }
.tray time { text-align: center; line-height: 12px; }
```
